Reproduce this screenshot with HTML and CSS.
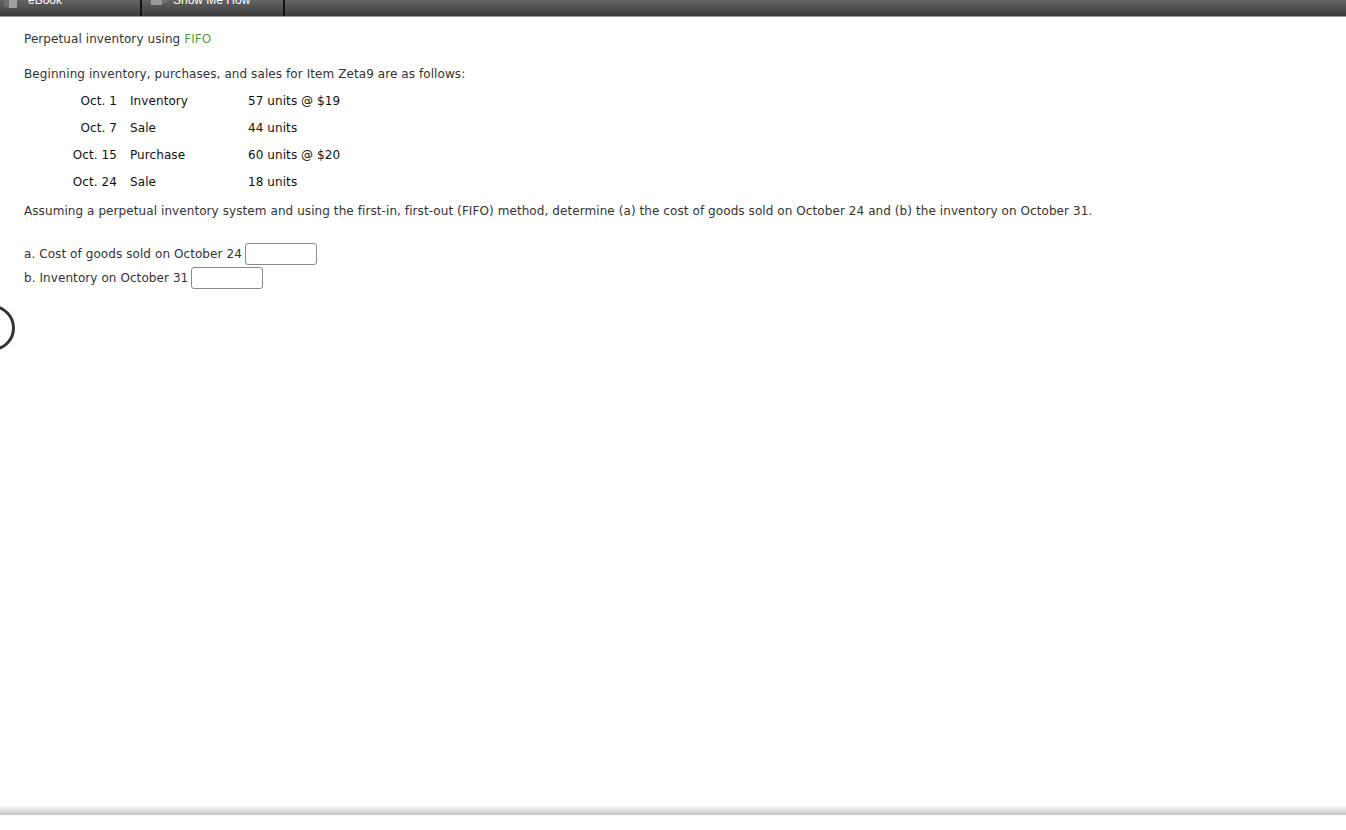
FILE: index.html
```html
<!DOCTYPE html>
<html>
<head>
<meta charset="utf-8">
<link rel="stylesheet" href="styles.css">
</head>
<body>
<div class="page">
  <div class="topbar">
    <div class="tab tab-ebook">
      <svg class="tabicon" width="14" height="10" viewBox="0 0 14 10"><rect x="0" y="0" width="5" height="9" fill="#6e6e6e"/><rect x="5" y="0" width="8" height="10" fill="#a0a0a0"/></svg>
      <span class="tablabel">eBook</span>
    </div>
    <div class="tab tab-show">
      <svg class="tabicon" width="16" height="7" viewBox="0 0 16 7"><rect x="0" y="0" width="11" height="7" fill="#9a9a9a"/><path d="M11 1 L16 0 L16 5 L11 5 Z" fill="#707070"/></svg>
      <span class="tablabel">Show Me How</span>
    </div>
    <div class="tab-rest"></div>
  </div>
  <div class="content">
    <p class="title">Perpetual inventory using <span class="green">FIFO</span></p>
    <p class="intro">Beginning inventory, purchases, and sales for Item Zeta9 are as follows:</p>
    <table class="inv">
      <tr><td class="date">Oct. 1</td><td class="label">Inventory</td><td class="val">57 units @ $19</td></tr>
      <tr><td class="date">Oct. 7</td><td class="label">Sale</td><td class="val">44 units</td></tr>
      <tr><td class="date">Oct. 15</td><td class="label">Purchase</td><td class="val">60 units @ $20</td></tr>
      <tr><td class="date">Oct. 24</td><td class="label">Sale</td><td class="val">18 units</td></tr>
    </table>
    <p class="question">Assuming a perpetual inventory system and using the first-in, first-out (FIFO) method, determine (a) the cost of goods sold on October 24 and (b) the inventory on October 31.</p>
    <div class="answers">
      <div class="ans">a. Cost of goods sold on October 24 <input class="box" type="text"></div>
      <div class="ans">b. Inventory on October 31 <input class="box" type="text"></div>
    </div>
  </div>
  <div class="circle"></div>
  <div class="bottomstrip"></div>
</div>
</body>
</html>
```
FILE: styles.css
```css
html, body {
  margin: 0;
  padding: 0;
  background: #fff;
}
.page {
  position: relative;
  width: 1346px;
  height: 830px;
  overflow: hidden;
  font-family: "DejaVu Sans", Verdana, sans-serif;
  font-size: 12px;
  letter-spacing: 0.08px;
  color: #333;
}
.topbar {
  display: flex;
  height: 16px;
  background: linear-gradient(#646464, #3c3c3c);
  border-bottom: 1px solid #9a9a9a;
  overflow: hidden;
}
.tab {
  display: flex;
  align-items: flex-start;
  height: 16px;
  border-right: 2px solid #111;
  box-sizing: border-box;
}
.tab-ebook { width: 142px; }
.tab-show { width: 143px; }
.tab-rest { flex: 1; }
.tabicon { margin-top: -2px; flex: none; }
.tab-ebook .tabicon { margin-left: 4px; }
.tab-show .tabicon { margin-left: 9px; margin-top: -2px; }
.tablabel {
  color: #fff;
  font-family: "Liberation Sans", Arial, sans-serif;
  font-size: 12px;
  line-height: 12px;
  letter-spacing: 0;
  margin-top: -6px;
  white-space: nowrap;
}
.tab-ebook .tablabel { margin-left: 10px; }
.tab-show .tablabel { margin-left: 6px; }
.content {
  padding: 0 0 0 24px;
}
.content p { margin: 0; }
.title {
  margin-top: 14px !important;
  line-height: 16px;
}
.green { color: #4f9e44; }
.intro {
  margin-top: 19px !important;
  line-height: 16px;
}
.inv {
  border-collapse: collapse;
  margin-top: 5px;
  margin-left: 41px;
  color: #111;
}
.inv td {
  height: 27px;
  padding: 0;
  vertical-align: middle;
  white-space: nowrap;
}
.inv .date { text-align: right; width: 52px; }
.inv .label { width: 131px; padding-left: 13px; box-sizing: border-box; }
.question {
  margin-top: 8px !important;
  line-height: 16px;
}
.answers {
  margin-top: 23px;
}
.ans {
  display: flex;
  align-items: center;
  height: 24px;
  gap: 3px;
  white-space: nowrap;
}
.box {
  width: 72px;
  height: 22px;
  box-sizing: border-box;
  border: 1px solid #8a8a8a;
  border-radius: 3px;
  margin: 0;
  padding: 0;
}
.circle {
  position: absolute;
  left: -31px;
  top: 305px;
  width: 40px;
  height: 40px;
  border: 3px solid #333;
  border-radius: 50%;
}
.bottomstrip {
  position: absolute;
  left: 0;
  right: 0;
  top: 806px;
  height: 9px;
  background: linear-gradient(#fafafa, #c4c4c4);
}
```
